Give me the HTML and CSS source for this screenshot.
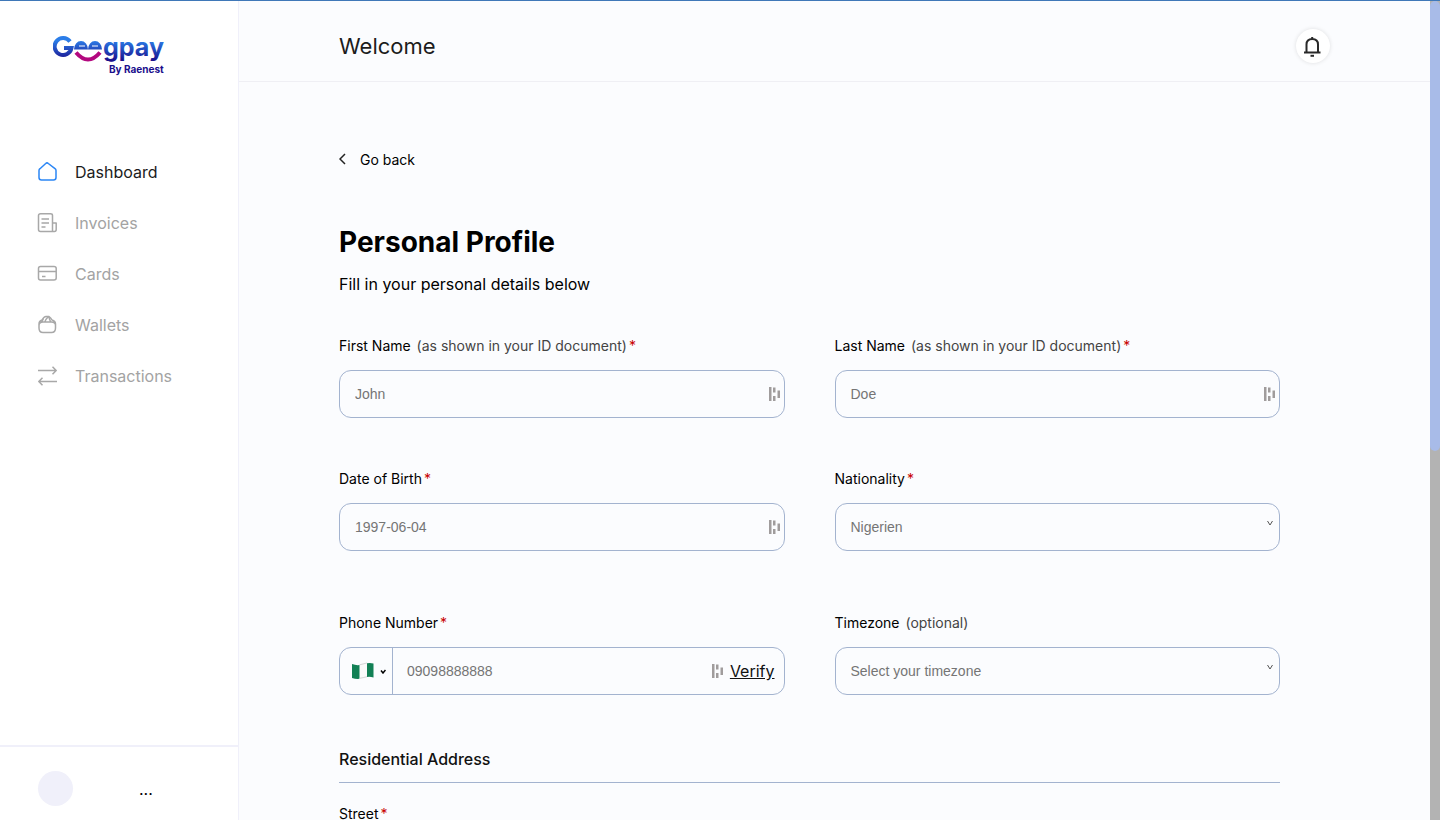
FILE: index.html
```html
<!DOCTYPE html>
<html lang="en">

<head>
<meta charset="utf-8">
<meta name="viewport" content="width=device-width, initial-scale=1">
<title>Personal Profile</title>
<link rel="stylesheet" href="styles.css">
</head>

<body>
<aside class="sidebar">
	<a class="logo" href="#">
		<svg width="124" height="46" viewBox="0 0 124 46">
			<defs>
				<linearGradient id="blue" gradientUnits="userSpaceOnUse" x1="0" y1="3" x2="0" y2="28">
					<stop offset="0.1" stop-color="#2b7de8"/>
					<stop offset="0.9" stop-color="#1a0f8c"/>
				</linearGradient>
			</defs>
			<path d="M17 6.500A8.500 8.500 0 1 0 18.500 13H11" fill="none" stroke="url(#blue)" stroke-width="4"/>
			<path fill="url(#blue)" d="M21 14.500a7 8.500 0 0 1 14 0zM35 14.500a7 8.500 0 0 1 14 0z"/>
			<path stroke="#fff" stroke-width="1" d="M26 11h6M39 11h6"/>
			<path d="M23 17.500Q35 31.500 47 17.500" fill="none" stroke="#b3087f" stroke-width="4"/>
			<text class="logo-name" x="50" y="21" fill="url(#blue)">gpay</text>
			<text class="logo-by" x="56" y="38">By Raenest</text>
		</svg>
	</a>
	<nav class="menu">
		<a class="menu-item active" href="#">
			<svg width="20" height="20" viewBox="0 0 20 20"><path d="M2 8.500Q2 7.500 3 6.700L8.700 1.500Q10 .2 11.300 1.500L18 6.700Q19 7.500 19 8.500V15.500Q19 18 16.500 18H4.500Q2 18 2 15.500Z"/></svg>
			Dashboard
		</a>
		<a class="menu-item" href="#">
			<svg width="20" height="20" viewBox="0 0 20 20"><path d="M15.500 18.500H3.500Q1.500 18.500 1.500 16.500V2.500Q1.500 .8 3.500 .8H13.500Q15.500 .8 15.500 2.500V18.500H17.500Q19.200 18.500 19.200 16.500V10H15.500M4.500 6H12M4.500 10H12M4.500 14H8.500"/></svg>
			Invoices
		</a>
		<a class="menu-item" href="#">
			<svg width="20" height="20" viewBox="0 0 20 20"><path d="M3.500 2.500H17Q19.200 2.500 19.200 4.500V14Q19.200 16 17 16H3.500Q1.500 16 1.500 14V4.500Q1.500 2.500 3.500 2.500ZM1.500 7.500H19M5 12.500H8.500"/></svg>
			Cards
		</a>
		<a class="menu-item" href="#">
			<svg width="20" height="20" viewBox="0 0 20 20"><path d="M6 7H14.500Q18.500 7 18.500 10.500V13Q18.500 17.500 14.500 17.500H6Q2 17.500 2 13V10.500Q2 7 6 7ZM2 10.500V9Q2 6 5 5Q7 1.500 9 1.500H12Q14 3 15 5Q18.500 6 18.500 9V10.500M5 6.500L6.500 3.500M8 6.500Q9 4 11 2M12 1.500Q12 3.500 13.500 6.500"/></svg>
			Wallets
		</a>
		<a class="menu-item" href="#">
			<svg width="20" height="20" viewBox="0 0 20 20"><path d="M1 4.500H19M15.500 .8L19.200 4.500L15.500 8.200M20 15.500H2M5.500 11.800L1.800 15.500L5.500 19.200"/></svg>
			Transactions
		</a>
	</nav>
	<div class="account">
		<span class="avatar"></span>
		<span class="account-name">...</span>
	</div>
</aside>

<main class="main">
	<header class="header">
		<h2 class="welcome">Welcome</h2>
		<button class="bell" type="button" aria-label="Notifications">
			<svg width="18" height="22" viewBox="0 0 18 22"><path d="M0 17.500H16.500M2.500 17V9.500Q2.500 4 8.200 4Q14 4 14 9.500V17M8.200 4V2"/><path d="M6.500 20.800H10"/></svg>
		</button>
	</header>

	<form class="profile">
		<a class="back" href="#">
			<svg width="7" height="12" viewBox="0 0 7 12"><path d="M6 1L1 6L6 11"/></svg>
			Go back
		</a>
		<h1 class="title">Personal Profile</h1>
		<p class="intro">Fill in your personal details below</p>

		<div class="row">
			<div class="field">
				<label for="first">First Name <span class="hint">(as shown in your ID document)</span><span class="req">*</span></label>
				<div class="box">
					<input id="first" type="text" placeholder="John">
					<svg class="bars" width="12" height="16" viewBox="0 0 12 16"><path d="M0 1h2.500v14H0zM4 1.500h2.500v5H4zM4 10h2.500v5H4zM8.500 4.500h2.500v7.500H8.500z"/></svg>
				</div>
			</div>
			<div class="field">
				<label for="last">Last Name <span class="hint">(as shown in your ID document)</span><span class="req">*</span></label>
				<div class="box">
					<input id="last" type="text" placeholder="Doe">
					<svg class="bars" width="12" height="16" viewBox="0 0 12 16"><path d="M0 1h2.500v14H0zM4 1.500h2.500v5H4zM4 10h2.500v5H4zM8.500 4.500h2.500v7.500H8.500z"/></svg>
				</div>
			</div>
		</div>

		<div class="row">
			<div class="field">
				<label for="birth">Date of Birth<span class="req">*</span></label>
				<div class="box">
					<input id="birth" type="text" placeholder="1997-06-04">
					<svg class="bars" width="12" height="16" viewBox="0 0 12 16"><path d="M0 1h2.500v14H0zM4 1.500h2.500v5H4zM4 10h2.500v5H4zM8.500 4.500h2.500v7.500H8.500z"/></svg>
				</div>
			</div>
			<div class="field">
				<label for="nation">Nationality<span class="req">*</span></label>
				<div class="box">
					<select id="nation"><option>Nigerien</option></select>
					<svg class="arrow" width="8" height="6" viewBox="0 0 8 6"><path d="M1.500 1L4 5L6.500 1"/></svg>
				</div>
			</div>
		</div>

		<div class="row row-phone">
			<div class="field">
				<label for="phone">Phone Number<span class="req">*</span></label>
				<div class="box">
					<button class="country" type="button" aria-label="Country code">
						<svg width="22" height="18" viewBox="0 0 22 18">
							<path fill="#fafafa" d="M1 2Q6 4 11 2Q16 0 21 1V15Q16 14 11 16Q6 18 1 16Z"/>
							<path fill="#128055" d="M0 2Q4 3.500 7.500 3V16.800Q4 17.200 0 16ZM15 1.300Q18 .5 21.500 1.500V15.500Q18 14.500 15 15Z"/>
							<path fill="none" stroke="#d5d5d5" d="M7.500 2.800Q11 2 15 1M7.500 16.300Q11 15.800 15 14.700"/>
						</svg>
						<svg class="caret" width="6" height="6" viewBox="0 0 6 6"><path d="M1 2.500L3 5L5.500 2"/></svg>
					</button>
					<input id="phone" type="tel" placeholder="09098888888">
					<svg class="bars" width="12" height="16" viewBox="0 0 12 16"><path d="M0 1h2.500v14H0zM4 1.500h2.500v5H4zM4 10h2.500v5H4zM8.500 4.500h2.500v7.500H8.500z"/></svg>
					<a class="verify" href="#">Verify</a>
				</div>
			</div>
			<div class="field">
				<label for="zone">Timezone <span class="hint">(optional)</span></label>
				<div class="box">
					<select id="zone"><option>Select your timezone</option></select>
					<svg class="arrow" width="8" height="6" viewBox="0 0 8 6"><path d="M1.500 1L4 5L6.500 1"/></svg>
				</div>
			</div>
		</div>

		<h3 class="section">Residential Address</h3>
		<div class="field">
			<label for="street">Street<span class="req">*</span></label>
			<div class="box"><input id="street" type="text"></div>
		</div>
	</form>
</main>

<div class="scroll"><div class="thumb"></div></div>
</body>

</html>
```

FILE: styles.css
```css
* {
	box-sizing: border-box;
}
body {
	margin: 0;
	height: 100vh;
	display: flex;
	overflow: hidden;
	border-top: 1px solid #3f78b8;
	background: #fbfcfe;
	color: #000;
	font-family: Inter, "Liberation Sans", sans-serif;
	font-size: 14px;
}
a {
	color: inherit;
	text-decoration: none;
}
svg {
	flex: none;
}
h1, h2, h3, p {
	margin: 0;
}

/* sidebar */
.sidebar {
	flex: none;
	width: 239px;
	display: flex;
	flex-direction: column;
	background: #fff;
	border-right: 1px solid #f0f0fa;
}
.logo {
	height: 145px;
	padding: 34px 0 0 53px;
}
.logo-name {
	font: bold 25px Inter, sans-serif;
}
.logo-by {
	font: bold 10px Inter, sans-serif;
	fill: #1a0f8c;
}
.menu {
	flex: 1;
}
.menu-item {
	display: flex;
	align-items: center;
	gap: 18px;
	height: 51px;
	padding-left: 37px;
	font-size: 16px;
	color: #a3a3a3;
}
.menu-item svg {
	fill: none;
	stroke: #a8a8a8;
	stroke-width: 1.5;
	stroke-linejoin: round;
}
.menu-item.active {
	color: #1c1c1c;
}
.menu-item.active svg {
	stroke: #2b86f5;
}
.account {
	display: flex;
	align-items: center;
	gap: 66px;
	height: 75px;
	padding: 10px 0 0 38px;
	border-top: 2px solid #f0f0fa;
}
.avatar {
	width: 35px;
	height: 35px;
	border-radius: 50%;
	background: #f0f0fa;
}
.account-name {
	font-size: 16px;
}

/* main column */
.main {
	flex: 1;
	min-width: 0;
	overflow: hidden;
}
.header {
	display: flex;
	align-items: center;
	justify-content: space-between;
	height: 81px;
	padding: 10px 100px 0;
	border-bottom: 1px solid #efeff4;
}
.welcome {
	font-size: 22px;
	line-height: 24px;
	font-weight: 400;
	color: #1c1c1c;
}
.bell {
	display: flex;
	align-items: center;
	justify-content: center;
	width: 34px;
	height: 34px;
	padding: 0;
	border: 0;
	border-radius: 50%;
	background: #fff;
	box-shadow: 0 0 4px rgba(0, 0, 0, 0.12);
}
.bell svg {
	fill: none;
	stroke: #292929;
	stroke-width: 2;
}
.profile {
	padding: 67px 150px 0 100px;
}
.back {
	display: flex;
	align-items: center;
	gap: 14px;
	height: 20px;
}
.back svg {
	fill: none;
	stroke: #222;
	stroke-width: 1.5;
}
.title {
	margin-top: 53px;
	font-size: 28px;
	line-height: 40px;
}
.intro {
	margin: 12px 0 42px;
	font-size: 16px;
	line-height: 20px;
}

/* form fields */
.row {
	display: grid;
	grid-template-columns: 1fr 1fr;
	gap: 50px;
	margin-bottom: 51px;
}
.row-phone {
	margin: 62px 0 54px;
}
.field label {
	display: block;
	line-height: 20px;
	margin-bottom: 14px;
	white-space: nowrap;
}
.hint {
	margin-left: 2px;
	color: #444;
}
.req {
	margin-left: 2px;
	color: #c80000;
}
.box {
	position: relative;
	display: flex;
	align-items: center;
	height: 48px;
	border: 1px solid #a3b3cf;
	border-radius: 12px;
}
.box input,
.box select {
	flex: 1;
	min-width: 0;
	height: 46px;
	padding: 0 15px;
	border: 0;
	outline: 0;
	background: none;
	color: #757575;
	font: 14px "Liberation Sans", sans-serif;
}
.box select {
	appearance: none;
}
.box input[type="tel"] {
	padding: 0 14px;
}
.box input::placeholder {
	color: #757575;
}
.bars {
	margin-right: 3px;
	fill: #a09c9c;
}
.arrow {
	position: absolute;
	right: 5px;
	top: 16px;
	fill: none;
	stroke: #555;
	pointer-events: none;
}
.country {
	display: flex;
	align-items: center;
	gap: 6px;
	height: 46px;
	padding: 0 6px 0 12px;
	border: 0;
	border-right: 1px solid #a3b3cf;
	background: none;
}
.caret {
	fill: none;
	stroke: #000;
	stroke-width: 1.5;
}
.verify {
	margin: 0 9px 0 3px;
	font-size: 16px;
	color: #111;
	text-decoration: underline;
}
.section {
	margin-bottom: 21px;
	padding-bottom: 13px;
	border-bottom: 1px solid #a3b3cf;
	color: #111;
	font-size: 16px;
	font-weight: 500;
	line-height: 20px;
}

/* scrollbar */
.scroll {
	flex: none;
	width: 10px;
	background: #b3b3b3;
}
.thumb {
	height: 55%;
	border-radius: 5px;
	background: #a8bbe8;
}
```
